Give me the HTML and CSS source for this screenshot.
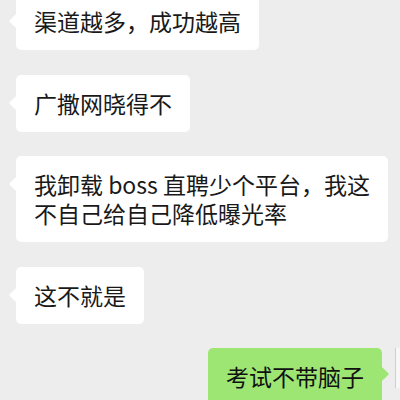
FILE: index.html
```html
<!DOCTYPE html>
<html lang="zh-CN">
<head>
<meta charset="utf-8">
<link rel="stylesheet" href="styles.css">
</head>
<body>
<div class="chat">
  <div class="row left"><div class="bubble">渠道越多，成功越高</div></div>
  <div class="row left"><div class="bubble">广撒网晓得不</div></div>
  <div class="row left"><div class="bubble">我卸载 boss 直聘少个平台，我这不自己给自己降低曝光率</div></div>
  <div class="row left"><div class="bubble">这不就是</div></div>
  <div class="row right"><div class="bubble green">考试不带脑子</div><div class="avatar"></div></div>
</div>
</body>
</html>
```
FILE: styles.css
```css
html, body {
  margin: 0;
  padding: 0;
  background: #ededed;
  overflow: hidden;
  width: 400px;
  height: 400px;
}
.chat {
  display: flex;
  flex-direction: column;
  gap: 24.5px;
  margin-top: -7px;
  font-family: "Noto Sans CJK SC", "Noto Sans", sans-serif;
  font-size: 23px;
  line-height: 29px;
  color: #191919;
}
.row {
  display: flex;
  align-items: flex-start;
}
.row.left {
  padding-left: 16px;
  padding-right: 12px;
}
.row.right {
  justify-content: flex-end;
  overflow: hidden;
}
.bubble {
  position: relative;
  background: #ffffff;
  border-radius: 5px;
  padding: 14px 18px;
}
.bubble::before {
  content: "";
  position: absolute;
  top: 23px;
  left: -5px;
  width: 10px;
  height: 10px;
  background: inherit;
  border-radius: 1px;
  transform: rotate(45deg);
}
.bubble.green {
  background: #9de673;
  color: #111;
}
.bubble.green::before {
  left: auto;
  right: -5px;
  top: 21px;
}
.avatar {
  flex: 0 0 40px;
  height: 40px;
  margin-left: 13px;
  margin-right: -35px;
  background: #f7f7f7;
  border-left: 1px solid #cfcfcf;
  box-sizing: border-box;
}
```
